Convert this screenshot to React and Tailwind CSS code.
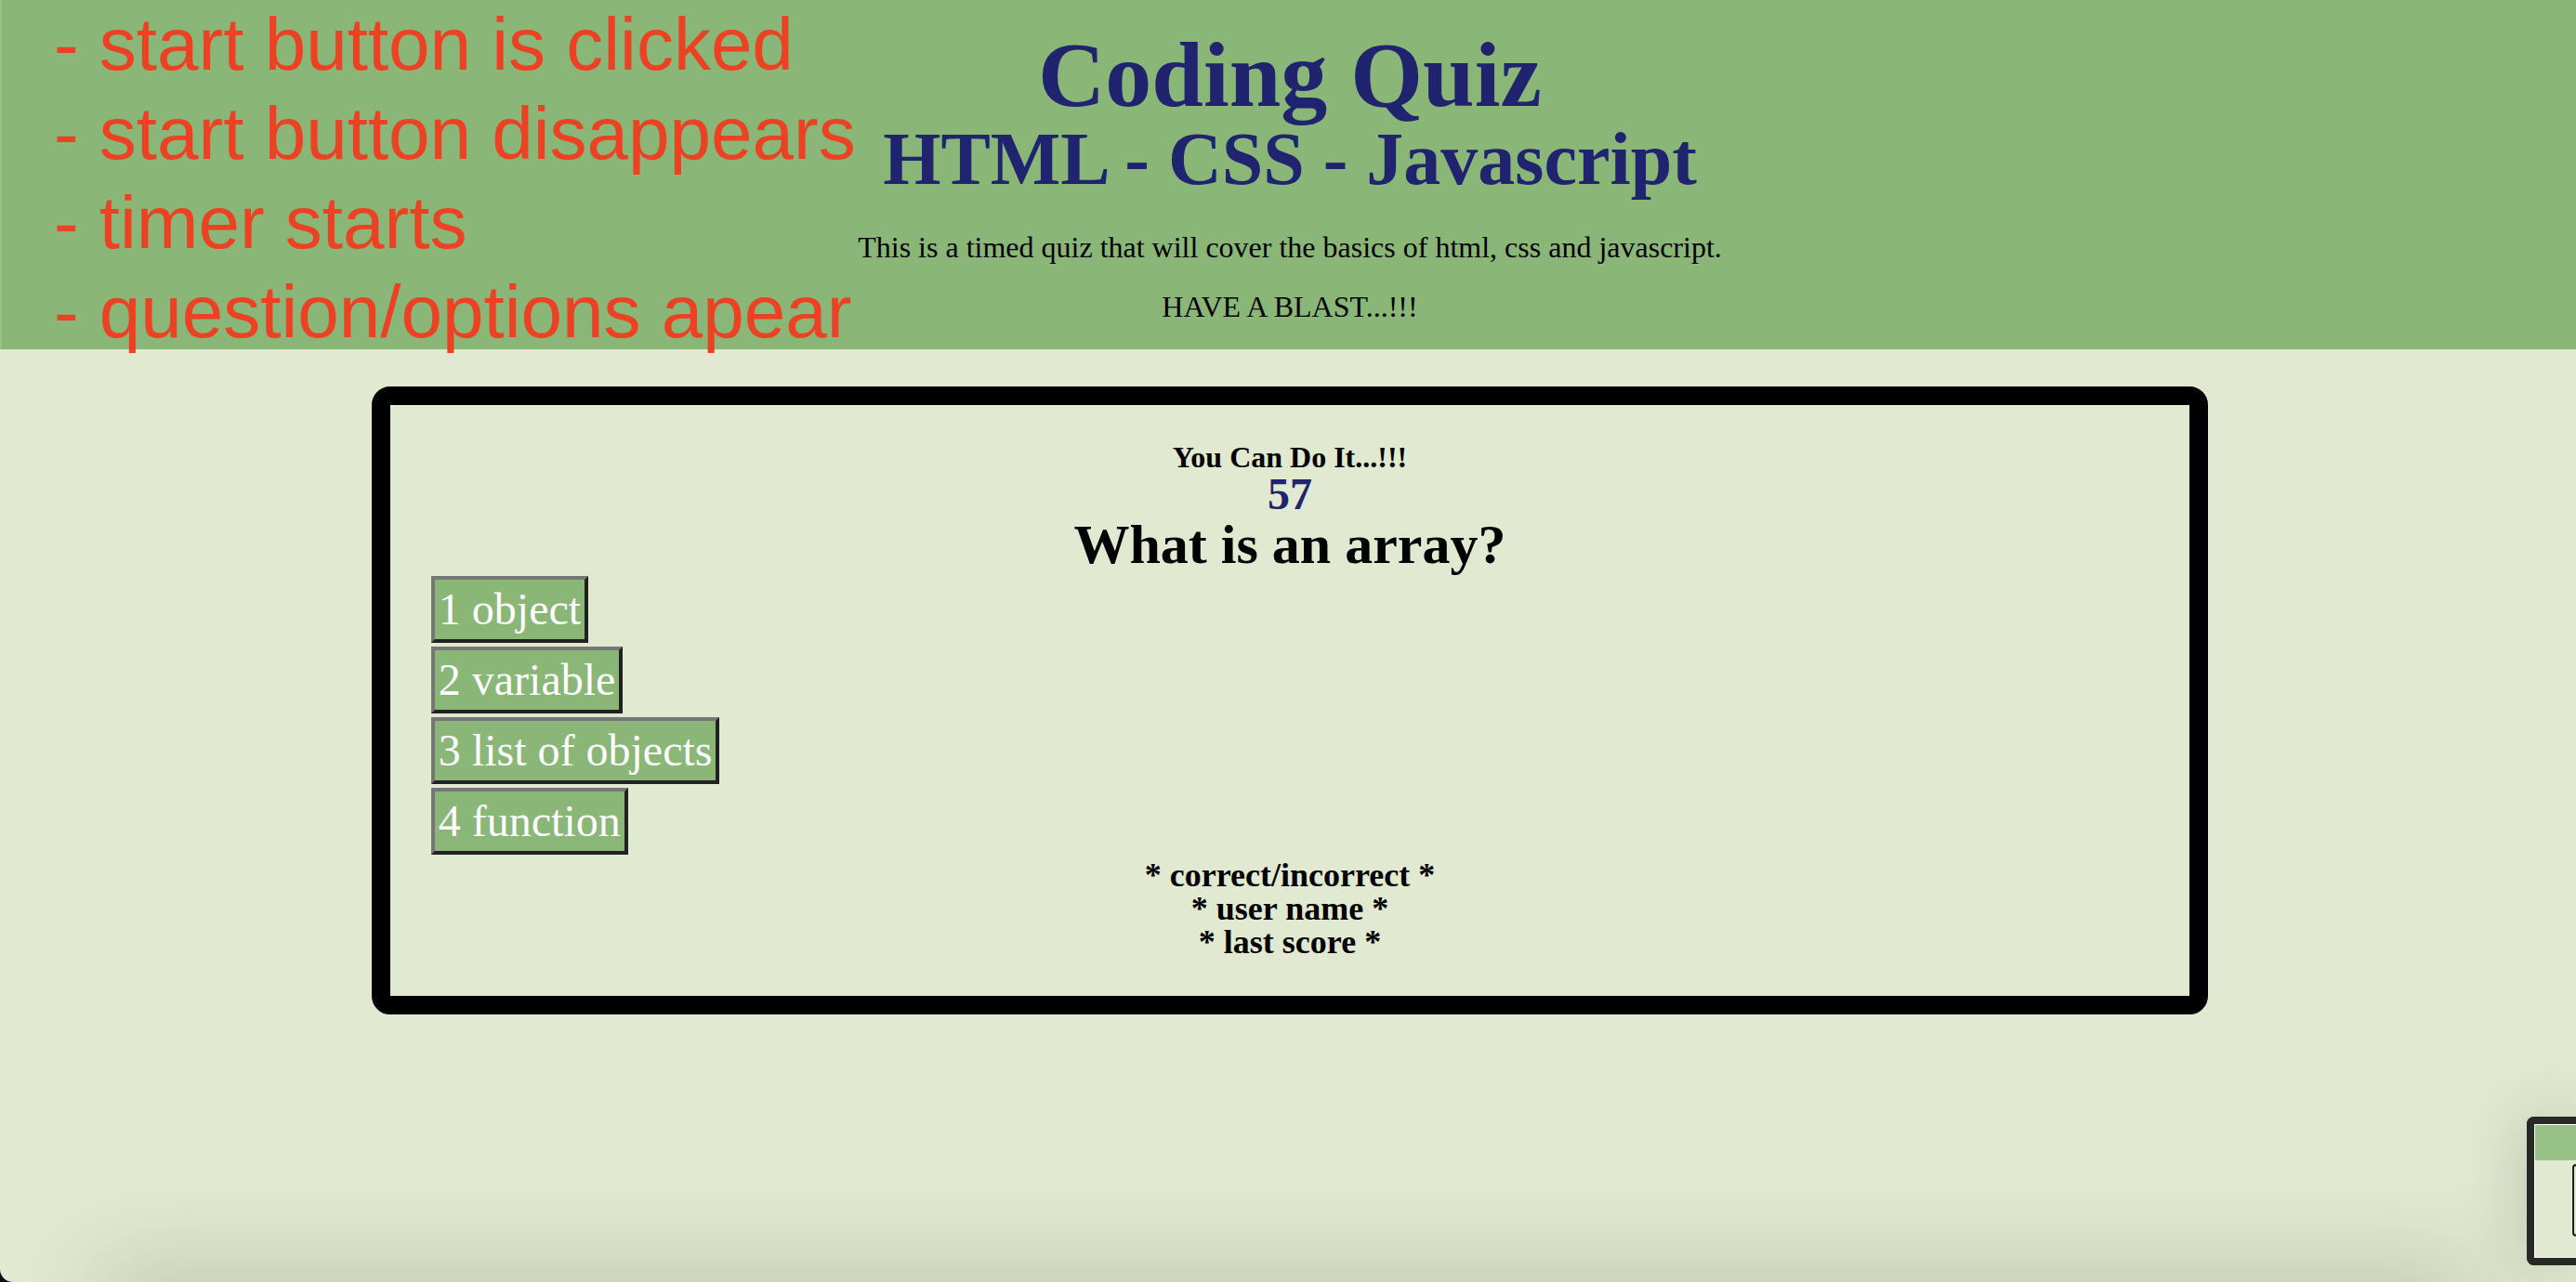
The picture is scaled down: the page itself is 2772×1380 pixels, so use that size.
const notes = [
  "- start button is clicked",
  "- start button disappears",
  "- timer starts",
  "- question/options apear",
];

const options = ["1 object", "2 variable", "3 list of objects", "4 function"];

function Notes() {
  return (
    <div className="absolute left-[58px] top-0 whitespace-nowrap font-['Liberation_Sans',Arial,sans-serif] text-[80px] leading-[96px] text-[#ed4124]">
      {notes.map((note) => (
        <p key={note}>{note}</p>
      ))}
    </div>
  );
}

function Header() {
  return (
    <header className="border-l-2 border-[#98c187] bg-[#8ab677] pb-[30px] pl-[2px] pt-[31px] text-center">
      <h1 className="text-[100px] font-bold leading-none text-[#20246f]">Coding Quiz</h1>
      <h2 className="text-[80px] font-bold leading-none text-[#20246f]">HTML - CSS - Javascript</h2>
      <div className="mt-[39px] flex flex-col gap-8 text-[32px] leading-none">
        <p>This is a timed quiz that will cover the basics of html, css and javascript.</p>
        <p>HAVE A BLAST...!!!</p>
      </div>
    </header>
  );
}

function Quiz() {
  return (
    <div className="pl-1">
      <main className="mx-[14.3%] mt-10 rounded-[20px] border-[20px] border-black p-10 text-center font-bold">
        <p className="text-[32px] leading-none">You Can Do It...!!!</p>
        <p className="text-5xl leading-none text-[#20246f]">57</p>
        <h3 className="text-[60px] leading-none">What is an array?</h3>
        <div className="m-1 flex flex-col items-start gap-1">
          {options.map((option) => (
            <button
              key={option}
              type="button"
              className="border-4 border-b-[#212121] border-l-[#767676] border-r-[#212121] border-t-[#767676] bg-[#8ab677] px-1 text-5xl font-normal leading-[64px] text-white"
            >
              {option}
            </button>
          ))}
        </div>
        <div className="text-4xl leading-none">
          <p>* correct/incorrect *</p>
          <p>* user name *</p>
          <p>* last score *</p>
        </div>
      </main>
    </div>
  );
}

function Thumbnail() {
  return (
    <div className="absolute bottom-[18px] right-0 h-40 w-[53px] rounded-l-lg border-y-8 border-l-8 border-[#282924] bg-[#e1e9d0] shadow-[0_0_70px_rgba(40,50,30,0.22)]">
      <div className="h-full overflow-hidden border-y border-l border-white">
        <div className="h-[38px] bg-[#98c187]" />
        <div className="ml-10 mt-1 h-[78px] rounded-l border-y-2 border-l-2 border-[#20211e]" />
      </div>
    </div>
  );
}

export default function App() {
  return (
    <div className="relative min-h-screen overflow-hidden bg-[#0e0f10] font-['Liberation_Serif','Times_New_Roman',serif] text-black">
      <div className="relative min-h-screen overflow-hidden rounded-bl-[14px] bg-[#e1e9d0]">
        <Header />
        <Quiz />
        <Notes />
        <div className="absolute -bottom-10 left-[110px] right-[110px] h-10 shadow-[0_0_100px_rgba(40,50,30,0.35)]" />
      </div>
      <Thumbnail />
    </div>
  );
}
